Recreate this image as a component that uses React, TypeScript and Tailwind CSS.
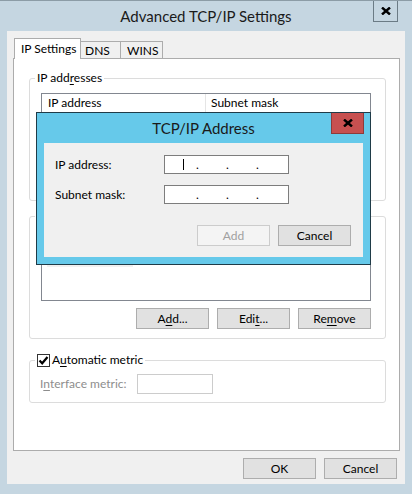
import React from "react";

function XGlyph({ className = "" }: { className?: string }) {
  return (
    <svg width="10" height="8" viewBox="0 0 10 8" className={className}>
      <path d="M1 0.5 L9 7.5 M9 0.5 L1 7.5" stroke="black" strokeWidth="2.4" strokeLinecap="butt" />
    </svg>
  );
}

function Btn({ children, disabled = false }: { children: React.ReactNode; disabled?: boolean }) {
  return (
    <div
      className={
        disabled
          ? "w-[73px] h-[21px] border border-[#cccccc] bg-[#f4f4f4] text-[#a0a0a0] flex items-center justify-center leading-none"
          : "w-[73px] h-[21px] border border-[#adadad] bg-[#e1e1e1] text-black flex items-center justify-center leading-none"
      }
    >
      {children}
    </div>
  );
}

function IpBox({ caret = false }: { caret?: boolean }) {
  return (
    <div className="w-[125px] h-[19px] border border-[#7d7d7d] bg-white flex items-center">
      <div className="w-[31px] h-full flex items-center pl-[18px]">
        {caret && <div className="w-[1px] h-[11px] bg-black" />}
      </div>
      <span className="w-[3px] text-center leading-none">.</span>
      <div className="w-[27px]" />
      <span className="w-[3px] text-center leading-none">.</span>
      <div className="w-[27px]" />
      <span className="w-[3px] text-center leading-none">.</span>
    </div>
  );
}

function ListView({ cols, hidden = false, faint = false }: { cols: [string, string]; hidden?: boolean; faint?: boolean }) {
  return (
    <div className="w-[330px] h-[70px] border border-[#828790] bg-white">
      <div className={hidden ? "invisible flex h-[19px] border-b border-[#e5e5e5]" : "flex h-[19px] border-b border-[#e5e5e5]"}>
        <div className="w-[164px] border-r border-[#e5e5e5] pl-[6px] flex items-center">{cols[0]}</div>
        <div className="pl-[5px] flex items-center">{cols[1]}</div>
      </div>
      {faint && <div className="ml-[5px] mt-[14px] w-[86px] h-[2px] bg-[#f0f0f0]" />}
    </div>
  );
}

function ButtonRow({ hidden = false }: { hidden?: boolean }) {
  return (
    <div className={hidden ? "invisible flex justify-end gap-[8px]" : "flex justify-end gap-[8px]"}>
      <Btn>
        A<span className="underline underline-offset-2">d</span>d...
      </Btn>
      <Btn>
        Edi<span className="underline underline-offset-2">t</span>...
      </Btn>
      <Btn>
        Re<span className="underline underline-offset-2">m</span>ove
      </Btn>
    </div>
  );
}

export default function App() {
  return (
    <div className="relative w-[412px] h-[494px] bg-[#c5d6e1] border-t border-[#8c9ca6] flex flex-col overflow-hidden font-['Lato',sans-serif] text-[12px] text-black">
      {/* Title bar */}
      <div className="relative h-[30px] shrink-0 flex items-center justify-center">
        <span className="text-[15px] text-[#1a1a1a] leading-none">Advanced TCP/IP Settings</span>
        <div className="absolute right-[14px] top-0 w-[25px] h-[21px] border border-t-0 border-[#6b7b85] flex items-center justify-center">
          <XGlyph />
        </div>
      </div>

      {/* Client area */}
      <div className="mx-[7px] h-[453px] bg-[#f0f0f0] pt-[7px] pl-[6px] pr-[5px] flex flex-col">
        {/* Tabs */}
        <div className="flex items-end h-[20px] pl-[1px]">
          <div className="relative z-10 -mb-px w-[67px] h-[21px] bg-white border-t border-l border-r border-[#acacac] flex items-center pl-[6px] pb-[1px]">
            IP Settings
          </div>
          <div className="w-[40px] h-[17px] border-t border-r border-[#acacac] bg-[#f0f0f0] flex items-center pl-[4px] pt-[1px]">
            DNS
          </div>
          <div className="w-[42px] h-[17px] border-t border-r border-[#acacac] bg-[#f0f0f0] flex items-center pl-[6px] pt-[1px]">
            WINS
          </div>
        </div>

        {/* Tab panel */}
        <div className="w-[387px] h-[393px] border border-[#acacac] bg-white flex flex-col">
          {/* IP addresses */}
          <fieldset className="ml-[15px] mt-[11px] w-[357px] border border-[#dcdcdc] rounded-[3px] px-[5px]">
            <legend className="px-[2px] leading-[16px]">
              IP add<span className="underline underline-offset-2">r</span>esses
            </legend>
            <div className="pl-[6px] pr-[9px] pt-[7px] pb-[9px] flex flex-col gap-[7px]">
              <ListView cols={["IP address", "Subnet mask"]} />
              <ButtonRow hidden />
            </div>
          </fieldset>

          {/* Default gateways */}
          <fieldset className="ml-[15px] mt-[7px] w-[357px] border border-[#dcdcdc] rounded-[3px] px-[5px]">
            <legend className="px-[2px] leading-[16px] invisible">
              Default <span className="underline underline-offset-2">g</span>ateways:
            </legend>
            <div className="pl-[6px] pr-[9px] pt-[7px] pb-[9px] flex flex-col gap-[7px]">
              <ListView cols={["Gateway", "Metric"]} hidden faint />
              <ButtonRow />
            </div>
          </fieldset>

          {/* Automatic metric */}
          <fieldset className="ml-[15px] mt-[13px] w-[357px] border border-[#dcdcdc] rounded-[3px] px-[5px]">
            <legend className="px-[2px] leading-[16px] flex items-center gap-[2px]">
              <span className="w-[13px] h-[13px] border border-[#333333] bg-white flex items-center justify-center">
                <svg width="11" height="11" viewBox="0 0 11 11">
                  <path d="M1.5 5.5 L4.2 8.3 L9.5 2" fill="none" stroke="black" strokeWidth="2.2" />
                </svg>
              </span>
              <span>
                A<span className="underline underline-offset-2">u</span>tomatic metric
              </span>
            </legend>
            <div className="pl-[5px] pt-[6px] pb-[8px] flex items-center">
              <span className="w-[97px] text-[#8d8d8d]">
                I<span className="underline underline-offset-2">n</span>terface metric:
              </span>
              <div className="w-[76px] h-[20px] border border-[#cccccc] bg-white" />
            </div>
          </fieldset>
        </div>

        {/* OK / Cancel */}
        <div className="mt-[7px] pr-[3px] flex justify-end gap-[8px]">
          <Btn>OK</Btn>
          <Btn>Cancel</Btn>
        </div>
      </div>

      {/* TCP/IP Address dialog */}
      <div className="absolute left-[36px] top-[111px] w-[335px] h-[153px] border border-[#1f3b48] bg-[#66c9ea] flex flex-col px-[7px] pb-[7px]">
        <div className="h-[30px] shrink-0 flex items-center justify-center">
          <span className="text-[15px] text-[#1a1a1a] leading-none">TCP/IP Address</span>
        </div>
        <div className="absolute right-[6px] top-0 w-[33px] h-[21px] bg-[#c75050] border border-t-0 border-[#8e3a3a] flex items-center justify-center">
          <XGlyph />
        </div>
        <div className="flex-1 bg-[#f0f0f0] pt-[12px] pl-[11px] pr-[12px] flex flex-col">
          <div className="flex items-center">
            <span className="w-[109px]">IP address:</span>
            <IpBox caret />
          </div>
          <div className="flex items-center mt-[11px]">
            <span className="w-[109px]">Subnet mask:</span>
            <IpBox />
          </div>
          <div className="mt-[21px] flex justify-end gap-[8px]">
            <Btn disabled>Add</Btn>
            <Btn>Cancel</Btn>
          </div>
        </div>
      </div>
    </div>
  );
}
